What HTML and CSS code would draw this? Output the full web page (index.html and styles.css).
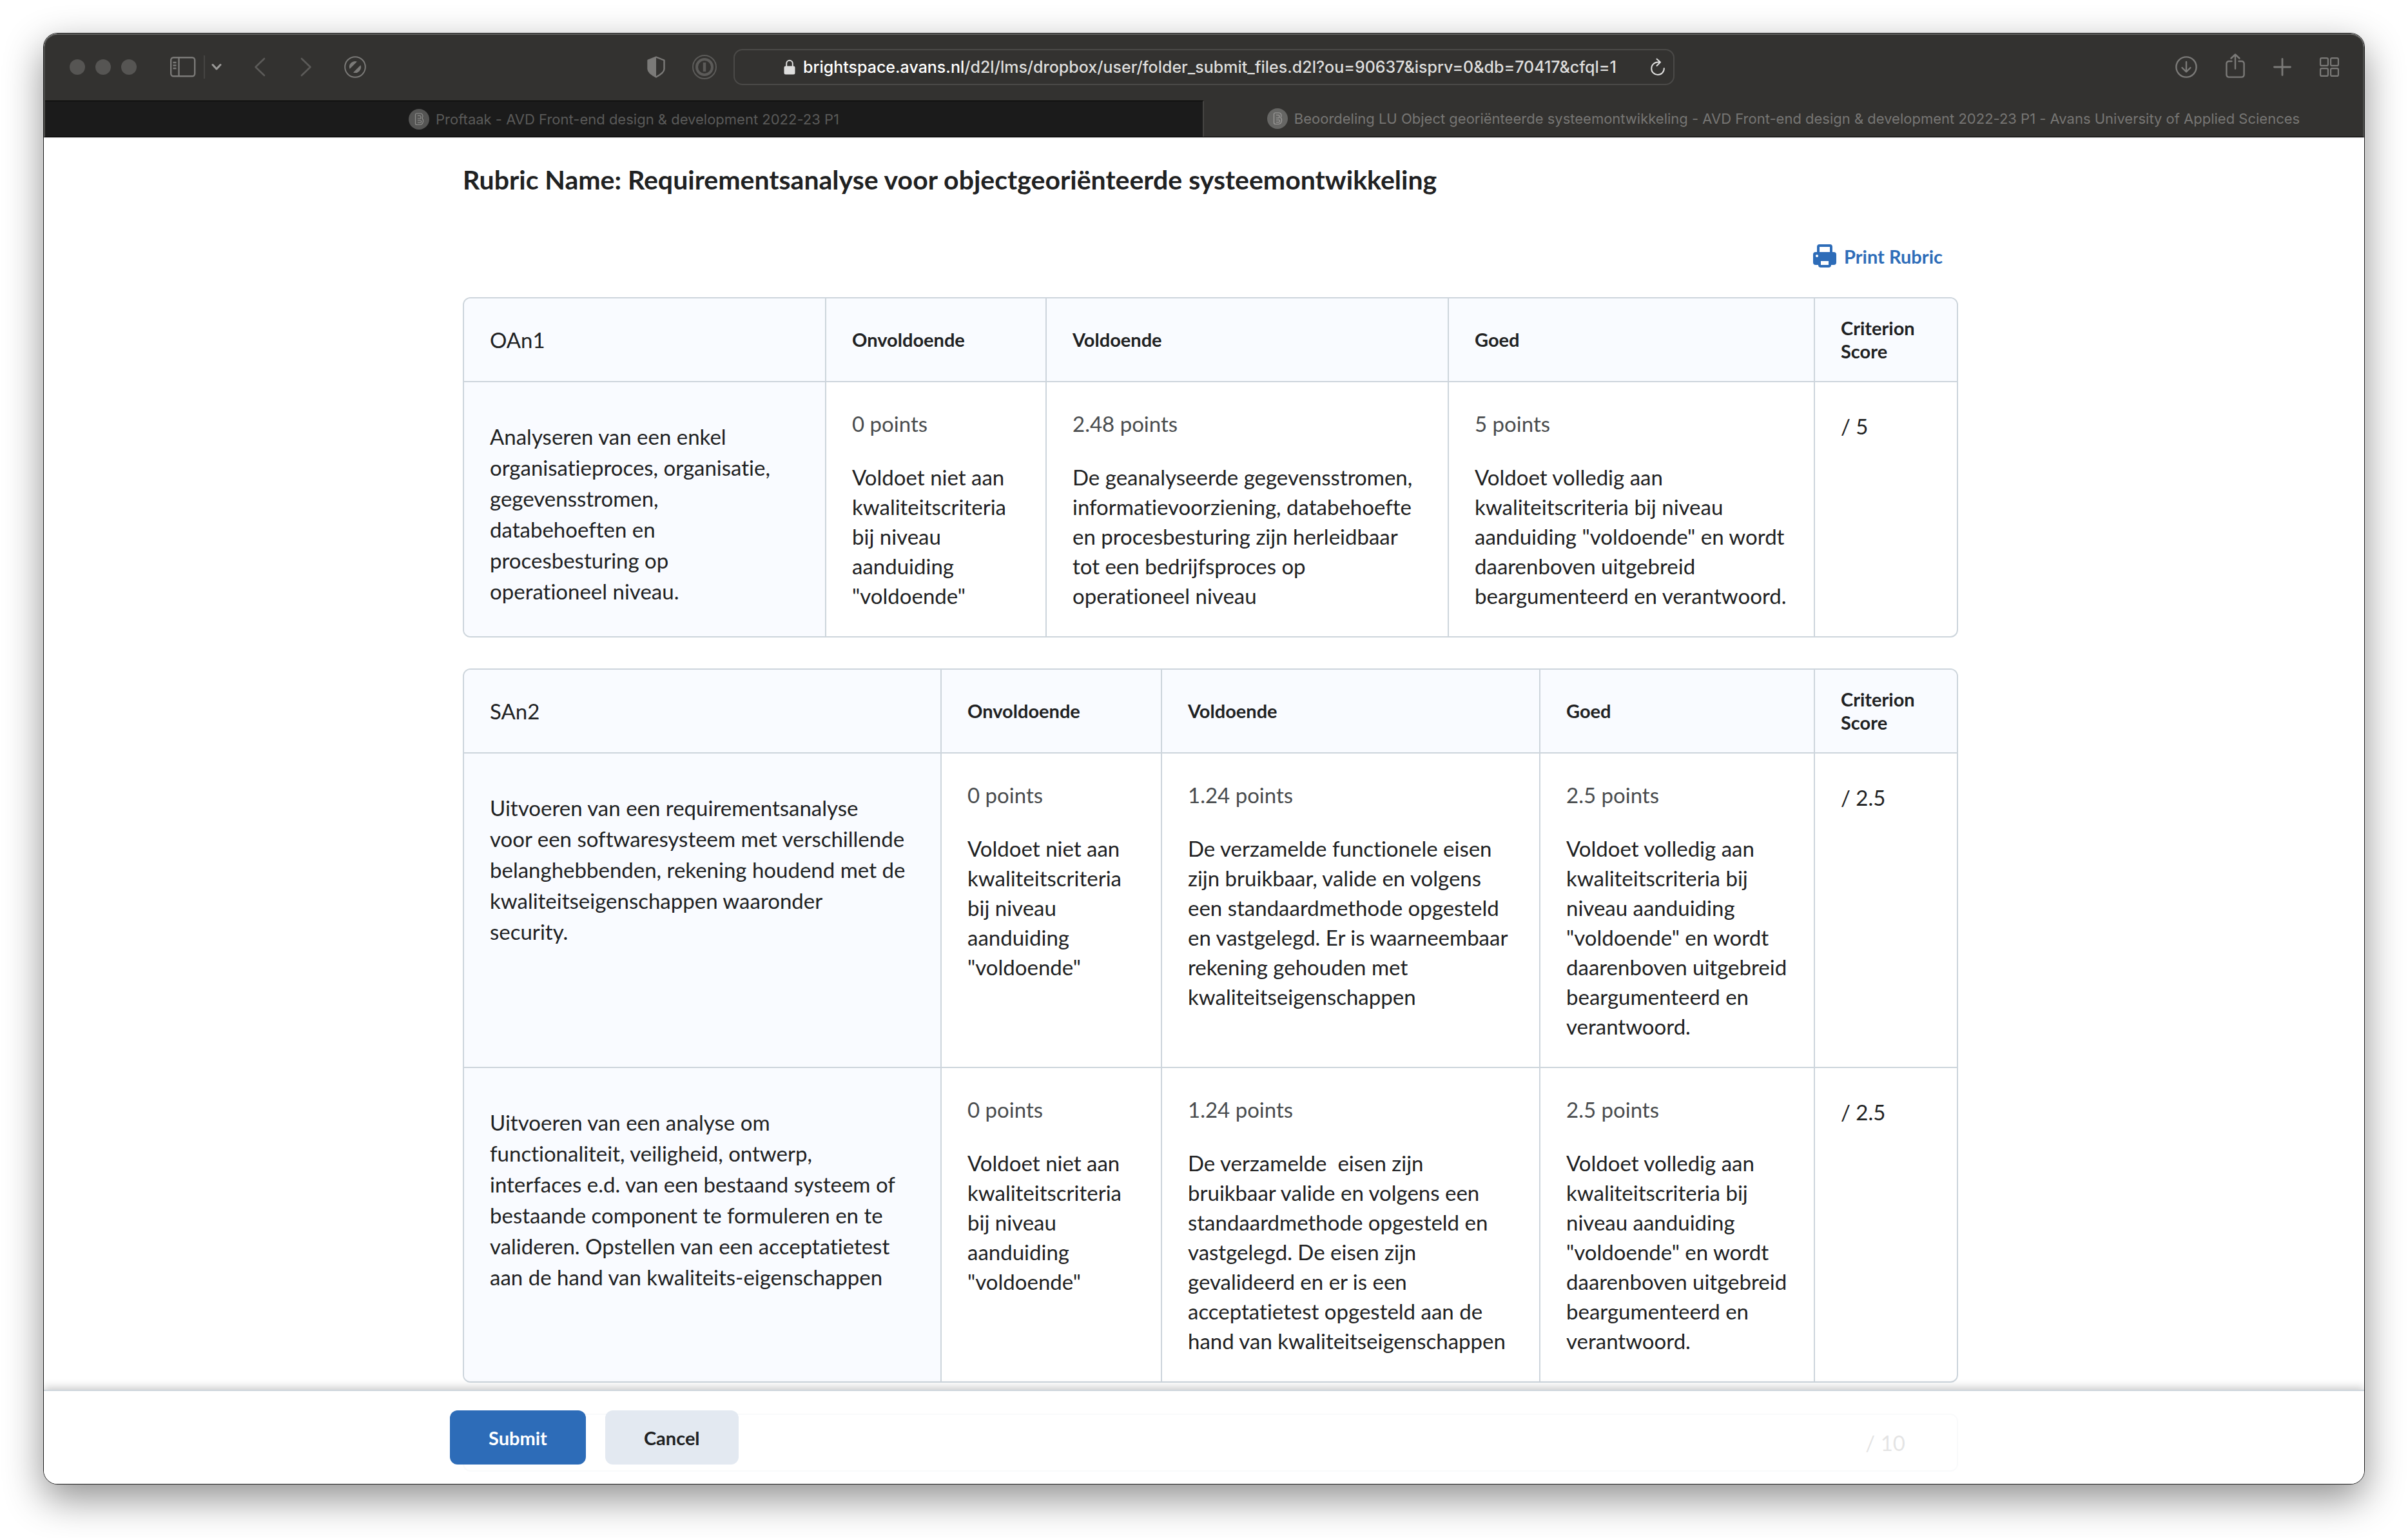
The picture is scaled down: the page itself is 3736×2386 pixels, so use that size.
FILE: index.html
```html
<!DOCTYPE html>
<html lang="nl">
<head>
<meta charset="utf-8">
<title>Beoordeling LU Object georiënteerde systeemontwikkeling</title>
<link rel="stylesheet" href="styles.css">
</head>
<body>
<div class="window">
  <header class="chrome">
    <div class="toolbar">
      <div class="toolbar-side">
        <div class="lights"><span class="light"></span><span class="light"></span><span class="light"></span></div>
        <button class="tool sidebar-tool" aria-label="Sidebar"><svg width="40" height="32" viewBox="0 0 40 32" fill="none" stroke="currentColor" stroke-width="2.4"><rect x="1.2" y="1.2" width="37" height="29" rx="4"/><path d="M13.5 1v30M4.500 9h5M4.500 13.500h5M4.500 18h5"/></svg></button>
        <span class="tool-divider"></span>
        <button class="tool" aria-label="Tab groups"><svg class="bright" width="16" height="12" viewBox="0 0 16 12" fill="none" stroke="currentColor" stroke-width="3" stroke-linecap="round" stroke-linejoin="round"><path d="M2 2.500l6 6.500 6-6.500"/></svg></button>
        <button class="tool back-tool" aria-label="Back"><svg class="dim" width="18" height="30" viewBox="0 0 18 30" fill="none" stroke="currentColor" stroke-width="2.600" stroke-linecap="round" stroke-linejoin="round"><path d="M16 2L2.500 15 16 28"/></svg></button>
        <button class="tool forward-tool" aria-label="Forward"><svg class="dim" width="18" height="30" viewBox="0 0 18 30" fill="none" stroke="currentColor" stroke-width="2.600" stroke-linecap="round" stroke-linejoin="round"><path d="M2 2l13.500 13L2 28"/></svg></button>
        <button class="tool compass-tool" aria-label="Extension"><svg width="34" height="34" viewBox="0 0 34 34"><circle cx="17" cy="17" r="15.800" fill="none" stroke="currentColor" stroke-width="2"/><path d="M8.500 20A9 9 0 0 1 20 8.500zM14 25.500A9 9 0 0 0 25.500 14z" fill="currentColor"/></svg></button>
        <div class="privacy">
          <button class="tool" aria-label="Privacy report"><svg width="28" height="34" viewBox="0 0 28 34"><path d="M14 1.500L26.500 6.500V20c0 5-5 8.500-12.500 12.500C6.500 28.500 1.500 25 1.500 20V6.500z" fill="none" stroke="currentColor" stroke-width="2.400" stroke-linejoin="round"/><path d="M14 1.500v31C6.500 28.500 1.500 25 1.500 20V6.500z" fill="currentColor"/></svg></button>
          <button class="tool" aria-label="Password manager"><svg class="dim" width="38" height="38" viewBox="0 0 38 38" fill="none" stroke="currentColor"><circle cx="19" cy="19" r="18" stroke-width="2"/><circle cx="19" cy="19" r="12" stroke-width="4"/><path d="M19 12v14" stroke-width="4.500"/></svg></button>
        </div>
      </div>
      <div class="address">
        <svg class="lock" width="18" height="24" viewBox="0 0 18 24"><path d="M4.200 11V6.500a4.800 4.800 0 0 1 9.600 0V11" fill="none" stroke="currentColor" stroke-width="2"/><rect x="0.500" y="10.500" width="17" height="13" rx="2.500" fill="currentColor"/></svg>
        <span class="url"><span class="domain">brightspace.avans.nl</span>/d2l/lms/dropbox/user/folder_submit_files.d2l?ou=90637&amp;isprv=0&amp;db=70417&amp;cfql=1</span>
        <button class="reload" aria-label="Reload"><svg width="24" height="28" viewBox="0 0 24 28" fill="none" stroke="currentColor" stroke-width="2" stroke-linecap="round" stroke-linejoin="round"><path d="M14 6.500h-2A9.800 9.800 0 1 0 21.800 16M10.500 1.500l5.500 5-5.500 5.500"/></svg></button>
      </div>
      <div class="toolbar-side toolbar-right">
        <button class="tool" aria-label="Downloads"><svg width="34" height="34" viewBox="0 0 34 34" fill="none" stroke="currentColor" stroke-width="2.400" stroke-linecap="round" stroke-linejoin="round"><circle cx="17" cy="17" r="15.600"/><path d="M17 9v15M10.500 18l6.500 6.500 6.500-6.500"/></svg></button>
        <button class="tool share-tool" aria-label="Share"><svg width="30" height="38" viewBox="0 0 30 38" fill="none" stroke="currentColor" stroke-width="2.400" stroke-linecap="round" stroke-linejoin="round"><path d="M9.500 12H5a3.600 3.600 0 0 0-3.600 3.600V33A3.600 3.600 0 0 0 5 36.600h20a3.600 3.600 0 0 0 3.600-3.600V15.600A3.600 3.600 0 0 0 25 12h-4.500M15 23.500V1.500M8.500 7.500L15 1.500l6.500 6"/></svg></button>
        <button class="tool" aria-label="New tab"><svg width="28" height="28" viewBox="0 0 28 28" fill="none" stroke="currentColor" stroke-width="2.800" stroke-linecap="round"><path d="M14 1.500v25M1.500 14h25"/></svg></button>
        <button class="tool" aria-label="Tab overview"><svg width="30" height="30" viewBox="0 0 30 30" fill="none" stroke="currentColor" stroke-width="2.200"><rect x="1.100" y="1.100" width="11.800" height="11.800" rx="2"/><rect x="17.100" y="1.100" width="11.800" height="11.800" rx="2"/><rect x="1.100" y="17.100" width="11.800" height="11.800" rx="2"/><rect x="17.100" y="17.100" width="11.800" height="11.800" rx="2"/></svg></button>
      </div>
    </div>
    <nav class="tabs">
      <a class="tab tab-idle" href="#"><svg class="favicon" width="32" height="32" viewBox="0 0 32 32"><circle cx="16" cy="16" r="16" fill="#555554"/><path d="M12.500 7h5.500c4 0 5 4.500 3 7.500 3 3 1.500 10-3.500 10h-5a2 2 0 0 1-2-2V9a2 2 0 0 1 2-2zM14 10.500h3.500c2 0 2 4.500 0 4.500H14M14 18h4c2.500 0 2 3.500 0 3.500h-4" fill="none" stroke="#8f8f8d" stroke-width="1.200"/></svg><span>Proftaak - AVD Front-end design &amp; development 2022-23 P1</span></a>
      <a class="tab tab-active" href="#"><svg class="favicon" width="32" height="32" viewBox="0 0 32 32"><circle cx="16" cy="16" r="16" fill="#666664"/><path d="M12.500 7h5.500c4 0 5 4.500 3 7.500 3 3 1.500 10-3.500 10h-5a2 2 0 0 1-2-2V9a2 2 0 0 1 2-2zM14 10.500h3.500c2 0 2 4.500 0 4.500H14M14 18h4c2.500 0 2 3.500 0 3.500h-4" fill="none" stroke="#a09f9d" stroke-width="1.200"/></svg><span>Beoordeling LU Object georiënteerde systeemontwikkeling - AVD Front-end design &amp; development 2022-23 P1 - Avans University of Applied Sciences</span></a>
    </nav>
  </header>
  <main class="page">
    <div class="container content">
      <h1 class="title">Rubric Name: Requirementsanalyse voor objectgeoriënteerde systeemontwikkeling</h1>
      <div class="actions">
        <button class="print"><svg width="36" height="36" viewBox="0 0 36 36"><path d="M6 13V4a4 4 0 0 1 4-4h16a4 4 0 0 1 4 4v9h-4V4H10v9z" fill="currentColor"/><path fill-rule="evenodd" d="M4 12h28a4 4 0 0 1 4 4v12a4 4 0 0 1-4 4h-4a4 4 0 0 1-4 4H12a4 4 0 0 1-4-4H4a4 4 0 0 1-4-4V16a4 4 0 0 1 4-4zM6 16a2 2 0 1 0 0 4 2 2 0 0 0 0-4zM12 26v6h12v-6z" fill="currentColor"/></svg>Print Rubric</button>
      </div>
      <table class="rubric">
        <colgroup><col class="oan-name"><col class="fail"><col class="oan-pass"><col class="oan-good"><col class="score-col"></colgroup>
        <thead><tr><th class="group" scope="col">OAn1</th><th scope="col">Onvoldoende</th><th scope="col">Voldoende</th><th scope="col">Goed</th><th scope="col">Criterion Score</th></tr></thead>
        <tbody>
          <tr>
            <th class="criterion" scope="row">Analyseren van een enkel organisatieproces, organisatie, gegevensstromen, databehoeften en procesbesturing op operationeel niveau.</th>
            <td><p class="points">0 points</p><p>Voldoet niet aan kwaliteitscriteria bij niveau aanduiding "voldoende"</p></td>
            <td><p class="points">2.48 points</p><p>De geanalyseerde gegevensstromen, informatievoorziening, databehoefte en procesbesturing zijn herleidbaar tot een bedrijfsproces op operationeel niveau</p></td>
            <td><p class="points">5 points</p><p>Voldoet volledig aan kwaliteitscriteria bij niveau aanduiding "voldoende" en wordt daarenboven uitgebreid beargumenteerd en verantwoord.</p></td>
            <td class="score">/ 5</td>
          </tr>
        </tbody>
      </table>
      <table class="rubric">
        <colgroup><col class="san-name"><col class="fail"><col class="san-pass"><col class="san-good"><col class="score-col"></colgroup>
        <thead><tr><th class="group" scope="col">SAn2</th><th scope="col">Onvoldoende</th><th scope="col">Voldoende</th><th scope="col">Goed</th><th scope="col">Criterion Score</th></tr></thead>
        <tbody>
          <tr>
            <th class="criterion" scope="row">Uitvoeren van een requirementsanalyse voor een softwaresysteem met verschillende belanghebbenden, rekening houdend met de kwaliteitseigenschappen waaronder security.</th>
            <td><p class="points">0 points</p><p>Voldoet niet aan kwaliteitscriteria bij niveau aanduiding "voldoende"</p></td>
            <td><p class="points">1.24 points</p><p>De verzamelde functionele eisen zijn bruikbaar, valide en volgens een standaardmethode opgesteld en vastgelegd. Er is waarneembaar rekening gehouden met kwaliteitseigenschappen</p></td>
            <td><p class="points">2.5 points</p><p>Voldoet volledig aan kwaliteitscriteria bij niveau aanduiding "voldoende" en wordt daarenboven uitgebreid beargumenteerd en verantwoord.</p></td>
            <td class="score">/ 2.5</td>
          </tr>
          <tr>
            <th class="criterion" scope="row">Uitvoeren van een analyse om functionaliteit, veiligheid, ontwerp, interfaces e.d. van een bestaand systeem of bestaande component te formuleren en te valideren. Opstellen van een acceptatietest aan de hand van kwaliteits-eigenschappen</th>
            <td><p class="points">0 points</p><p>Voldoet niet aan kwaliteitscriteria bij niveau aanduiding "voldoende"</p></td>
            <td><p class="points">1.24 points</p><p>De verzamelde&nbsp; eisen zijn bruikbaar valide en volgens een standaardmethode opgesteld en vastgelegd. De eisen zijn gevalideerd en er is een acceptatietest opgesteld aan de hand van kwaliteitseigenschappen</p></td>
            <td><p class="points">2.5 points</p><p>Voldoet volledig aan kwaliteitscriteria bij niveau aanduiding "voldoende" en wordt daarenboven uitgebreid beargumenteerd en verantwoord.</p></td>
            <td class="score">/ 2.5</td>
          </tr>
        </tbody>
      </table>
      <div class="total">/ 10</div>
    </div>
    <footer class="footer">
      <div class="container buttons">
        <button class="btn btn-primary">Submit</button>
        <button class="btn">Cancel</button>
      </div>
    </footer>
  </main>
</div>
</body>
</html>
```
FILE: styles.css
```css
* { box-sizing: border-box; }

body {
  margin: 0;
  height: 100vh;
  padding: 51px 67px 83px;
  display: flex;
  background: #fff;
  color: #202122;
  font-family: Lato, sans-serif;
  font-size: 33px;
  font-variant-ligatures: none;
}

button {
  font-family: inherit;
  border: 0;
  background: none;
  padding: 0;
}

svg { display: block; flex: none; }
p { margin: 0; }

.window {
  flex: 1;
  min-width: 0;
  display: flex;
  flex-direction: column;
  border: 1px solid #1c1c1c;
  border-radius: 22px;
  overflow: hidden;
  background: #fff;
  box-shadow: 0 22px 60px rgba(0, 0, 0, 0.44);
}

/* Browser chrome */
.chrome {
  font-family: Inter, sans-serif;
  background: #333230;
  color: #7b7a78;
  border-radius: 21px 21px 0 0;
  border: 2px solid #5f5f5d;
  border-bottom: 1px solid #000;
  border-left-color: #4c4c4a;
  border-right-color: #4c4c4a;
}

.toolbar {
  height: 102px;
  padding-bottom: 2px;
  display: grid;
  grid-template-columns: 1fr 1460px 1fr;
  align-items: center;
}

.toolbar-side { display: flex; align-items: center; }
.tool { color: #7b7a78; }
.dim { color: #5c5b59; }
.bright { color: #9b9a98; }

.lights { display: flex; gap: 16px; padding-left: 38px; }
.light { width: 24px; height: 24px; border-radius: 50%; background: #565553; }
.sidebar-tool { margin-left: 52px; }
.tool-divider { width: 2px; height: 36px; margin: 0 10px 0 12px; background: #464543; }
.back-tool { margin-left: 50px; }
.forward-tool { margin-left: 54px; }
.compass-tool { margin-left: 50px; }
.privacy { display: flex; align-items: center; gap: 42px; margin-left: auto; padding-right: 26px; }

.address {
  height: 56px;
  display: flex;
  align-items: center;
  border: 2px solid #4b4a48;
  border-radius: 14px;
  padding: 0 12px 0 76px;
  color: #dededd;
}

.url { margin-left: 12px; font-size: 25px; font-weight: 500; white-space: nowrap; }
.domain { color: #fff; }
.reload { margin-left: auto; color: #dededd; }

.toolbar-right { justify-content: flex-end; gap: 44px; padding-right: 37px; }
.share-tool { margin-bottom: 4px; }

.tabs { display: grid; grid-template-columns: 1fr 1fr; }

.tab {
  height: 56px;
  display: flex;
  align-items: center;
  justify-content: center;
  gap: 10px;
  font-size: 22px;
  color: #777674;
  text-decoration: none;
  white-space: nowrap;
}

.tab-idle { background: #1b1b1b; color: #5a5a59; border-top: 1px solid #000; border-right: 2px solid #454442; }

/* Page */
.page { flex: 1; min-height: 0; position: relative; overflow: hidden; border-top: 1px solid #d0d0d0; }
.container { max-width: 2340px; margin: 0 auto; }
.content { padding: 35px 0 0 20px; }
.title { margin: 0; font-size: 41px; line-height: 60px; font-weight: 700; }

.actions { display: flex; justify-content: flex-end; padding: 64px 24px 40px 0; }

.print {
  display: flex;
  align-items: center;
  gap: 12px;
  height: 48px;
  font-size: 29px;
  font-weight: 700;
  color: #2d6cb8;
}

.rubric {
  width: 100%;
  table-layout: fixed;
  border-collapse: separate;
  border-spacing: 0;
  border: 2px solid #cdd5dc;
  border-radius: 12px;
  overflow: hidden;
  margin-bottom: 48px;
}

.oan-name { width: 562px; }
.oan-good { width: 568px; }
.san-name { width: 741px; }
.san-good { width: 426px; }
.fail { width: 342px; }
.score-col { width: 220px; }

.rubric th,
.rubric td {
  text-align: left;
  vertical-align: top;
  padding: 40px 38px 40px 40px;
  border-right: 2px solid #cdd5dc;
  border-bottom: 2px solid #cdd5dc;
}

.rubric tr > :last-child { border-right: 0; }
.rubric tbody tr:last-child > * { border-bottom: 0; }

.rubric thead th {
  height: 130px;
  padding-top: 0;
  padding-bottom: 0;
  vertical-align: middle;
  background: #f9fbff;
  font-size: 29px;
  line-height: 36px;
  font-weight: 700;
}

.rubric thead .group { font-size: 33px; font-weight: 400; }
.rubric .criterion { padding-top: 60px; padding-right: 54px; background: #f9fbff; font-weight: 400; line-height: 48px; }
.rubric td { line-height: 46px; }
.rubric .points { line-height: 48px; margin-bottom: 36px; color: #494c4e; }
.rubric .score { padding-top: 45px; }

.total {
  height: 90px;
  display: flex;
  align-items: center;
  justify-content: flex-end;
  padding-right: 80px;
  border: 2px solid #cdd5dc;
  border-radius: 12px;
}

.footer {
  position: absolute;
  inset: auto 0 0;
  height: 146px;
  padding-top: 30px;
  border-top: 2px solid #cdd5dc;
  background: rgba(255, 255, 255, 0.88);
  box-shadow: 0 -4px 12px rgba(0, 0, 0, 0.2);
}

.buttons { display: flex; gap: 30px; }

.btn {
  height: 84px;
  padding: 0 60px;
  border-radius: 12px;
  background: #e3e9f1;
  color: #202122;
  font-size: 29px;
  font-weight: 700;
}

.btn-primary { background: #2d6cb8; color: #fff; }
```
